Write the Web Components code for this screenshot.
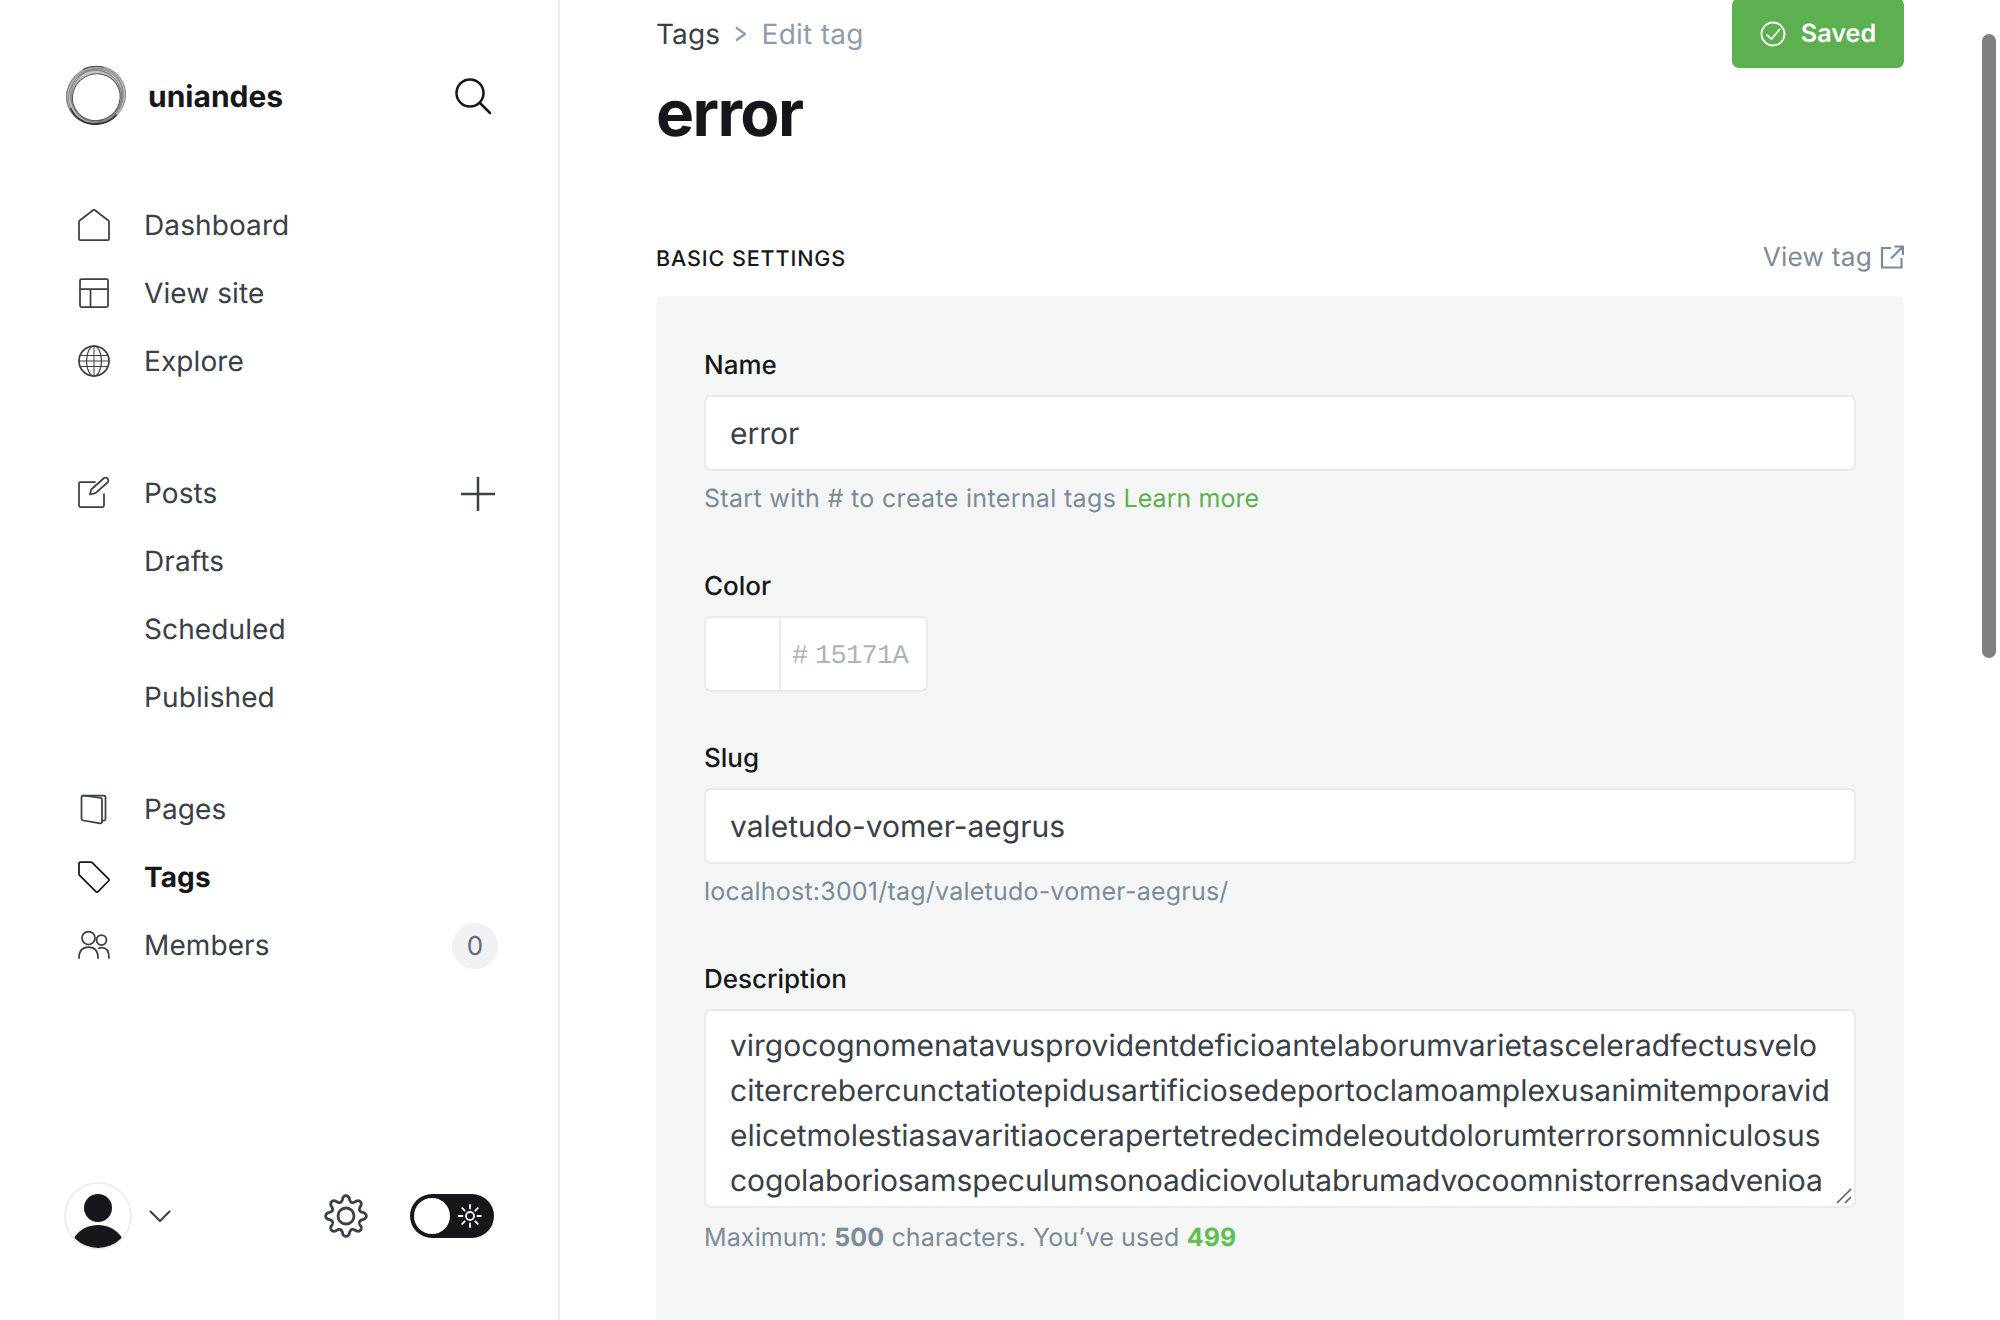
<!DOCTYPE html>
<html lang="en"><head><meta charset="utf-8"><title>Edit tag</title>
<style>
html,body{margin:0;padding:0;height:100%;overflow:hidden;background:#fff}
body{font-family:Inter,"Liberation Sans",sans-serif;color:#15171a;text-rendering:geometricPrecision}
</style></head><body>
<ghost-shell>
  <ghost-sidebar slot="side">
    <brand-bar></brand-bar>
    <nav-group style="margin-bottom:64px">
      <nav-item icon="home">Dashboard</nav-item>
      <nav-item icon="site">View site</nav-item>
      <nav-item icon="globe">Explore</nav-item>
    </nav-group>
    <nav-group>
      <nav-item icon="posts" extra="plus">Posts</nav-item>
      <nav-item>Drafts</nav-item>
      <nav-item>Scheduled</nav-item>
      <nav-item>Published</nav-item>
    </nav-group>
    <nav-group>
      <nav-item icon="pages">Pages</nav-item>
      <nav-item icon="tag" active>Tags</nav-item>
      <nav-item icon="members" extra="count">Members</nav-item>
    </nav-group>
    <sidebar-foot></sidebar-foot>
  </ghost-sidebar>
  <tag-page slot="main">
    <page-head></page-head>
    <section-head></section-head>
    <form-panel>
      <form-field label="Name">
        <text-box value="error"></text-box>
        <span slot="hint" style="letter-spacing:.33px">Start with # to create internal tags <a style="letter-spacing:.05px">Learn more</a></span>
      </form-field>
      <form-field label="Color" style="margin-bottom:44px"><color-box></color-box></form-field>
      <form-field label="Slug">
        <text-box value="valetudo-vomer-aegrus"></text-box>
        <span slot="hint" style="letter-spacing:.22px">localhost:3001/tag/valetudo-vomer-aegrus/</span>
      </form-field>
      <form-field label="Description">
        <desc-box></desc-box>
        <span slot="hint" style="letter-spacing:.12px">Maximum: <b>500</b> characters. You’ve used <b class="g">499</b></span>
      </form-field>
    </form-panel>
  </tag-page>
  <scroll-thumb slot="thumb"></scroll-thumb>
</ghost-shell>

<script>
const ICONS={
home:'<path d="M1 30V12.6a1 1 0 0 1 .4-.8L15 1.2a1.6 1.6 0 0 1 2 0l13.600 10.600a1 1 0 0 1 .4.800V30a1 1 0 0 1-1 1H2a1 1 0 0 1-1-1z"/>',
site:'<rect x="2" y="2" width="28" height="28" rx="1.500"/><path d="M2 12h28M12.500 12V30"/>',
globe:'<circle cx="16" cy="16" r="15"/><ellipse cx="16" cy="16" rx="7.500" ry="15" stroke-width="1.200"/><path d="M16 1v30M2.500 10.500h27M1 16h30M2.500 21.500h27" stroke-width="1"/>',
posts:'<path d="M17 5H2.500A1.500 1.500 0 0 0 1 6.500v22A1.500 1.500 0 0 0 2.500 30h22a1.500 1.500 0 0 0 1.500-1.500V17"/><path d="M12 17.500l1.200-5L25.500 1.500a2.800 2.800 0 0 1 4 0 2.800 2.800 0 0 1 0 4L17.500 16.200z"/>',
pages:'<path d="M5 2.500h21a1.500 1.500 0 0 1 1.500 1.500v22a1.500 1.500 0 0 1-1.500 1.500h-2"/><path d="M5 2.500l17.500 2.400a1.500 1.500 0 0 1 1.500 1.500V29a1.500 1.500 0 0 1-1.800 1.400L5.500 27.500A2 2 0 0 1 3.500 25.800V4a1.500 1.500 0 0 1 1.500-1.500z"/>',
tag:'<path d="M2.500 1h10.300a2 2 0 0 1 1.400.6l16.300 16.300a1.500 1.500 0 0 1 0 2.100L20 30.600a1.500 1.500 0 0 1-2.100 0L1.600 14.300A2 2 0 0 1 1 12.900V2.500A1.500 1.500 0 0 1 2.500 1z"/>',
members:'<circle cx="10.500" cy="9" r="6.500"/><path d="M1 29c0-7 3.500-11 9.500-11s9.500 4 9.500 11"/><circle cx="23.500" cy="11" r="5"/><path d="M21 19.200c1-.4 1.800-.5 2.700-.5 4.800 0 7.300 3.800 7.300 10.300"/>'
};
function gearPath(cx,cy,R,a,n){let d='';for(let i=0;i<=360;i++){const t=i*Math.PI/180;let c=Math.cos(n*t);
  c=Math.sign(c)*Math.pow(Math.abs(c),.7);
  const r=R+a*c;d+=(i?'L':'M')+(cx+r*Math.sin(t)).toFixed(2)+' '+(cy-r*Math.cos(t)).toFixed(2);}return d+'Z';}
const def=(name,css,html,extra={})=>{
  const t=document.createElement('template');
  t.innerHTML=`<style>${css}</style>${html}`;
  customElements.define(name,class extends HTMLElement{
    constructor(){super();this.attachShadow({mode:'open'}).appendChild(t.content.cloneNode(true));}
    connectedCallback(){extra.init&&extra.init.call(this,this.shadowRoot);}
  });
};
def('ghost-shell',`:host{display:grid;grid-template-columns:560px 1fr;height:100vh;overflow:hidden;position:relative}
  ::slotted([slot=thumb]){position:absolute;top:34px;right:4px}`,
  `<slot name="side"></slot><slot name="main"></slot><slot name="thumb"></slot>`);
def('ghost-sidebar',`:host{display:flex;flex-direction:column;box-sizing:border-box;height:100vh;border-right:2px solid #ebeef0;padding:65px 62px 0 65px;position:relative}`,`<slot></slot>`);
def('brand-bar',`:host{display:flex;align-items:center;height:62px;margin-bottom:64px}
  svg.l{width:62px;height:62px;flex:none}
  b{font-size:30px;font-weight:700;margin-left:21px;flex:1;color:#15171a;position:relative;top:1px}
  svg.s{width:38px;height:38px;fill:none;stroke:#15171a;stroke-width:2.500;stroke-linecap:round;margin-right:4px}`,
  `<svg class="l" viewBox="0 0 62 62" fill="none">
   <ellipse cx="31" cy="30.500" rx="30.500" ry="29" transform="rotate(-35 31 30.500)" fill="#c4c4c4"/>
   <g stroke="#555" stroke-width=".8" opacity=".6">
    <ellipse cx="31" cy="30.500" rx="30" ry="28.600" transform="rotate(-35 31 30.500)"/>
    <ellipse cx="30" cy="31" rx="28.500" ry="27" transform="rotate(-20 30 31)"/>
    <ellipse cx="30" cy="32" rx="27" ry="26.200" transform="rotate(-50 30 32)"/>
    <ellipse cx="32" cy="30" rx="27.500" ry="25" transform="rotate(-60 32 30)"/>
    <ellipse cx="31" cy="31" rx="26.500" ry="25.200" transform="rotate(60 31 31)"/>
   </g>
   <ellipse cx="31.300" cy="32.300" rx="24" ry="23.300" transform="rotate(-30 31.300 32.300)" fill="#fff" stroke="#555" stroke-width="1"/>
   <path d="M6 44C10 53 20 59.500 31 59 40 58.500 47 55.500 51 50" stroke="#333" stroke-width="1.800" stroke-linecap="round"/>
   <path d="M18 4.500C24 1.500 32 1 38 2" stroke="#555" stroke-width="1.200" stroke-linecap="round"/></svg>
   <b>uniandes</b>
   <svg class="s" viewBox="0 0 38 38"><circle cx="16" cy="16" r="13.500"/><path d="M26 26l10 10"/></svg>`);
def('nav-group',`:host{display:flex;flex-direction:column;margin-bottom:44px}`,`<slot></slot>`);
def('nav-item',`:host{display:flex;align-items:center;height:68px;font-size:28px;color:#394047;letter-spacing:.1px;position:relative}
  .i{width:32px;height:32px;margin:0 34px 0 13px;flex:none;fill:none;stroke:#394047;stroke-width:1.750;stroke-linecap:round;stroke-linejoin:round}
  :host([active]){font-weight:700;color:#15171a;letter-spacing:.1px}
  :host([active]) .i{stroke:#15171a}
  .t{flex:1}
  .plus{display:block;width:34px;height:34px;stroke:#394047;stroke-width:2.500;fill:none;margin-right:1px;position:relative;top:1px}
  .n{width:46px;height:46px;border-radius:50%;background:#eff1f3;display:flex;align-items:center;justify-content:center;font-size:26px;color:#626d79;margin-right:-2px;position:relative;top:1px}`,
  `<svg class="i" viewBox="0 0 32 32"></svg><span class="t"><slot></slot></span><span class="x"></span>`,
  {init(r){const k=this.getAttribute('icon');r.querySelector('.i').innerHTML=k?ICONS[k]:'';
    const e=this.getAttribute('extra'),x=r.querySelector('.x');
    if(e==='plus')x.innerHTML='<svg class="plus" viewBox="0 0 34 34"><path d="M17 0v34M0 17h34"/></svg>';
    if(e==='count')x.innerHTML='<div class="n">0</div>';x.style.display=e?'block':'none';}});
def('sidebar-foot',`:host{display:flex;align-items:center;position:absolute;left:64px;right:64px;top:1182px;height:68px}
  .a{width:68px;height:68px;border-radius:50%;border:2px solid #ebeef0;box-sizing:border-box;overflow:hidden;flex:none}
  .a svg{display:block;width:100%;height:100%}
  .c{width:22px;height:12px;margin-left:17px;fill:none;stroke:#394047;stroke-width:2;flex:none}
  .sp{flex:1}
  .g{width:44px;height:44px;fill:none;stroke:#394047;stroke-width:2.800;margin-right:42px;flex:none}
  .t{width:84px;height:44px;border-radius:22px;background:#15171a;position:relative;flex:none}
  .t i{position:absolute;left:4px;top:4px;width:36px;height:36px;border-radius:50%;background:#fff}
  .t svg{position:absolute;left:48px;top:10px;width:24px;height:24px;fill:none;stroke:#fff;stroke-width:1.800;stroke-linecap:round}`,
  `<div class="a"><svg viewBox="0 0 64 64"><circle cx="32" cy="24" r="14" fill="#15171a"/><ellipse cx="32" cy="65" rx="27" ry="24" fill="#15171a"/></svg></div>
   <svg class="c" viewBox="0 0 22 12"><path d="M1 1l10 10L21 1"/></svg><span class="sp"></span>
   <svg class="g" viewBox="0 0 44 44"><circle cx="22" cy="22" r="8"/><path class="gp"/></svg>
   <div class="t"><i></i><svg viewBox="0 0 24 24"><circle cx="12" cy="12" r="4"/><path d="M12 1v3.500M12 19.500V23M1 12h3.500M19.500 12H23M4.200 4.200l2.500 2.500M17.300 17.300l2.500 2.500M4.200 19.800l2.500-2.500M17.300 6.700l2.500-2.500"/></svg></div>`,
  {init(r){r.querySelector('.gp').setAttribute('d',gearPath(22,22,17.500,2.800,8));}});
def('tag-page',`:host{display:block;padding:0 96px 0 97px;height:100vh;overflow:hidden;box-sizing:border-box}`,`<slot></slot>`);
def('page-head',`:host{display:block;height:210px;position:relative}
  .top{display:flex;justify-content:space-between;align-items:flex-start}
  .crumb{display:flex;align-items:center;font-size:28px;color:#394047;height:68px;letter-spacing:.1px;margin-left:-1px}
  .crumb svg{width:11px;height:16px;margin:0 15.500px 0 15px;fill:none;stroke:#8e9cac;stroke-width:2.200}
  .crumb span{color:#8e9cac;letter-spacing:.25px}
  h1{margin:0;font-size:64px;font-weight:700;letter-spacing:-1.600px;line-height:72px;margin-top:10px;margin-left:-1px;color:#15171a}
  .btn{height:70px;margin-top:-2px;padding-top:2px;width:172px;background:#5cb04f;border-radius:7px;color:#fff;font-size:25.250px;font-weight:600;display:flex;align-items:center;justify-content:center;gap:15px;box-sizing:border-box}
  .btn svg{width:26px;height:26px;fill:none;stroke:#fff;stroke-width:1.800;stroke-linecap:round;stroke-linejoin:round}`,
  `<div class="top"><div class="crumb">Tags<svg viewBox="0 0 11 16"><path d="M1 1.500L10 8l-9 6.500"/></svg><span>Edit tag</span></div>
   <div class="btn"><svg viewBox="0 0 26 26"><circle cx="13" cy="13" r="11.500"/><path d="M7 14l4.500 4L19.500 8.500"/></svg>Saved</div></div>
   <h1>error</h1>`);
def('section-head',`:host{display:flex;justify-content:space-between;align-items:center;height:86px;box-sizing:border-box;padding-top:10px;margin-left:-1px}
  h2{margin:2px 0 0;font-size:21.500px;font-weight:500;letter-spacing:.9px;color:#15171a}
  .v{font-size:26.250px;color:#7c8b9a;display:flex;align-items:center;gap:8px;letter-spacing:.2px;margin-top:-2px}
  svg{width:24px;height:24px;fill:none;stroke:#7c8b9a;stroke-width:2.200}`,
  `<h2>BASIC SETTINGS</h2><div class="v">View tag<svg viewBox="0 0 24 24"><path d="M11 3H2v19.500h19.500V13M14.500 1.500H23V10M23 1.500L11 13.500"/></svg></div>`);
def('form-panel',`:host{display:block;background:#f4f5f5;border-radius:7px;padding:47px 48px 0 48px;height:1100px;box-sizing:border-box;margin-left:-1px}`,`<slot></slot>`);
def('form-field',`:host{display:block;margin-bottom:46px}
  label{display:block;font-size:26px;font-weight:500;color:#15171a;line-height:44px;margin-bottom:8px;position:relative;top:1px}
  .h{font-size:25px;margin-top:9px;line-height:38px;color:#7c8b9a}`,
  `<label></label><slot></slot><div class="h"><slot name="hint"></slot></div>`,
  {init(r){r.querySelector('label').textContent=this.getAttribute('label');
    if(!this.querySelector('[slot=hint]'))r.querySelector('.h').style.display='none';
    this.querySelectorAll('a').forEach(a=>{a.style.color='#5cb04f';});
    this.querySelectorAll('b').forEach(b=>{b.style.fontWeight='700';b.style.color=b.className==='g'?'#60bf50':'#7c8b9a';});}});
def('text-box',`:host{display:flex;align-items:center;height:76px;box-sizing:border-box;background:#fff;border:2.500px solid #e8eaec;border-radius:7px;padding:1.500px 24px 0;font-size:30px;color:#394047;letter-spacing:-.03px}`,
  `<span></span>`,{init(r){r.querySelector('span').textContent=this.getAttribute('value');}});
def('color-box',`:host{display:flex;width:224px;height:76px;box-sizing:border-box;background:#fff;border:2.500px solid #e8eaec;border-radius:7px}
  .s{width:73px;border-right:2px solid #e8eaec}
  .t{flex:1;display:flex;align-items:center;padding:5px 0 0 11px;font:27px "Liberation Mono",monospace;color:#abb4be;white-space:pre;word-spacing:-8px;letter-spacing:-.7px}`,
  `<div class="s"></div><div class="t"># 15171A</div>`);
def('desc-box',`:host{display:block;height:199px;box-sizing:border-box;background:#fff;border:2.500px solid #e8eaec;border-radius:7px;padding:13px 24px;font-size:30px;line-height:45px;color:#394047;overflow:hidden;position:relative;margin-bottom:11px}
  div{white-space:nowrap}
  svg{position:absolute;right:2px;bottom:2px;width:16px;height:16px;stroke:#555;stroke-width:1.500}`,
  `<div style="letter-spacing:-.03px">virgocognomenatavusprovidentdeficioantelaborumvarietasceleradfectusvelo</div>
<div style="letter-spacing:.02px">citercrebercunctatiotepidusartificiosedeportoclamoamplexusanimitemporavid</div>
<div style="letter-spacing:.005px">elicetmolestiasavaritiaocerapertetredecimdeleoutdolorumterrorsomniculosus</div>
<div style="letter-spacing:-.105px">cogolaboriosamspeculumsonoadiciovolutabrumadvocoomnistorrensadvenioa</div><svg viewBox="0 0 16 16"><path d="M1 15L15 1M9 15l6-6"/></svg>`);
def('scroll-thumb',`:host{display:block;width:14px;height:624px;border-radius:7px;background:#808080}`,``);
</script>
</body></html>
